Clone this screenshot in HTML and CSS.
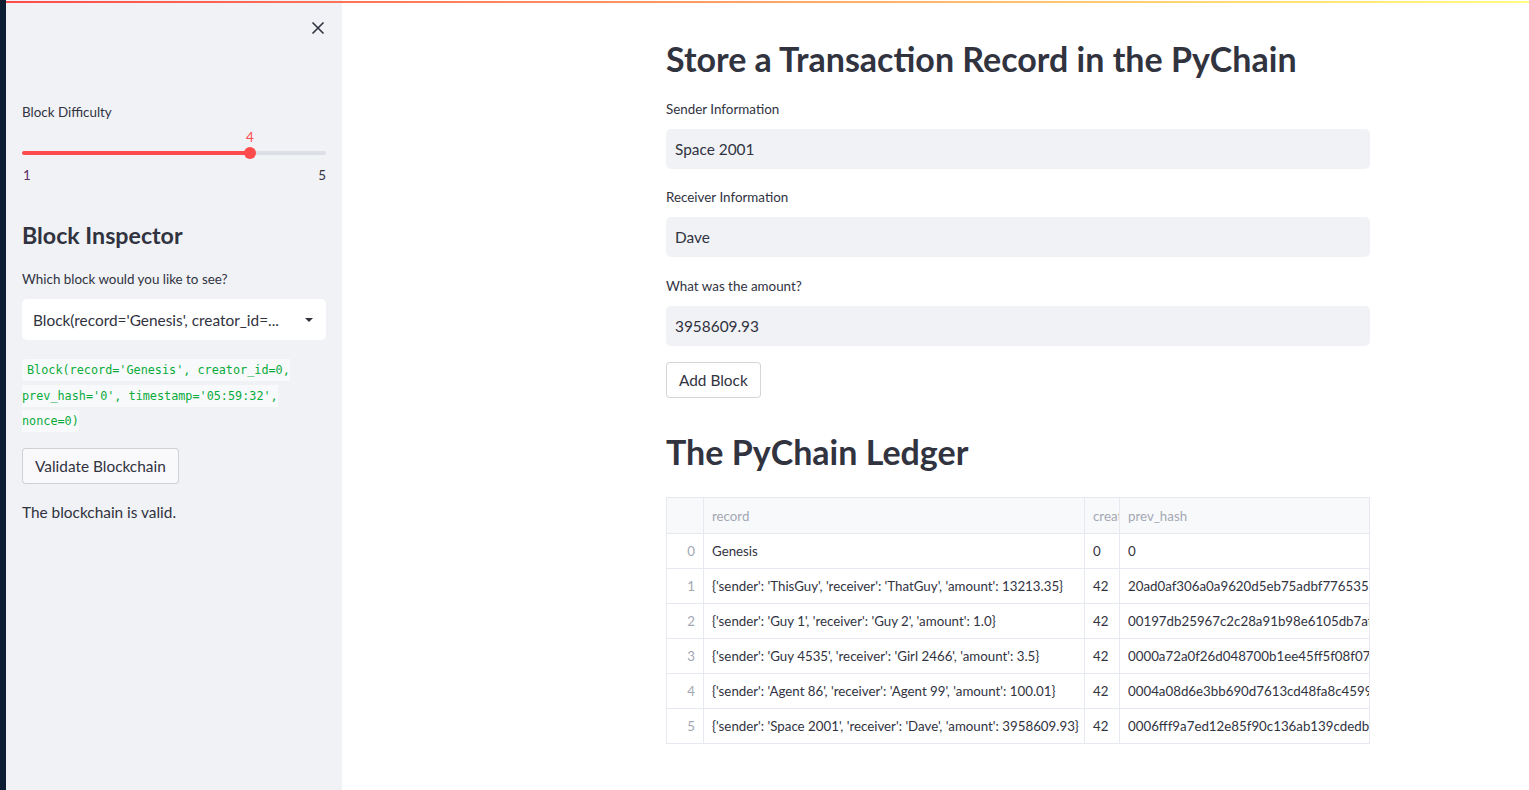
FILE: index.html
```html
<!DOCTYPE html>
<html>
<head>
<meta charset="utf-8">
<link rel="stylesheet" href="styles.css">
</head>
<body>
<div class="strip"></div>
<div class="decoration"></div>
<aside class="sidebar">
  <div class="close-row">
    <svg class="close" width="14" height="14" viewBox="0 0 14 14"><path d="M1.5 1.5 L12.5 12.5 M12.5 1.5 L1.5 12.5" stroke="#31333f" stroke-width="1.6" fill="none"/></svg>
  </div>
  <div class="label sb-label">Block Difficulty</div>
  <div class="slider">
    <div class="track">
      <div class="fill" style="width:75%"></div>
      <div class="thumb" style="left:75%"><span class="thumb-val">4</span></div>
    </div>
    <div class="ticks"><span class="tick-min">1</span><span>5</span></div>
  </div>
  <h2 class="sb-h2">Block Inspector</h2>
  <div class="label">Which block would you like to see?</div>
  <div class="select">
    <span class="select-text">Block(record='Genesis', creator_id=...</span>
    <svg width="10" height="6" viewBox="0 0 10 6"><path d="M1 1 H9 L5 5 Z" fill="#31333f"/></svg>
  </div>
  <p class="code-p"><code>Block(record='Genesis', creator_id=0, prev_hash='0', timestamp='05:59:32', nonce=0)</code></p>
  <div><button class="btn sb-btn">Validate Blockchain</button></div>
  <p class="valid">The blockchain is valid.</p>
</aside>
<main class="main">
  <div class="block">
    <h1 class="h1-first">Store a Transaction Record in the PyChain</h1>
    <div class="label m-label">Sender Information</div>
    <div class="input">Space 2001</div>
    <div class="label m-label2">Receiver Information</div>
    <div class="input">Dave</div>
    <div class="label m-label3">What was the amount?</div>
    <div class="input">3958609.93</div>
    <div><button class="btn add-btn">Add Block</button></div>
    <h1 class="h1-second">The PyChain Ledger</h1>
    <div class="table">
      <div class="row head">
        <div class="c idx"></div>
        <div class="c rec">record</div>
        <div class="c cre">creat</div>
        <div class="c hash">prev_hash</div>
      </div>
      <div class="row">
        <div class="c idx">0</div>
        <div class="c rec">Genesis</div>
        <div class="c cre">0</div>
        <div class="c hash">0</div>
      </div>
      <div class="row">
        <div class="c idx">1</div>
        <div class="c rec">{'sender': 'ThisGuy', 'receiver': 'ThatGuy', 'amount': 13213.35}</div>
        <div class="c cre">42</div>
        <div class="c hash">20ad0af306a0a9620d5eb75adbf77653587</div>
      </div>
      <div class="row">
        <div class="c idx">2</div>
        <div class="c rec">{'sender': 'Guy 1', 'receiver': 'Guy 2', 'amount': 1.0}</div>
        <div class="c cre">42</div>
        <div class="c hash">00197db25967c2c28a91b98e6105db7af84</div>
      </div>
      <div class="row">
        <div class="c idx">3</div>
        <div class="c rec">{'sender': 'Guy 4535', 'receiver': 'Girl 2466', 'amount': 3.5}</div>
        <div class="c cre">42</div>
        <div class="c hash">0000a72a0f26d048700b1ee45ff5f08f077ae</div>
      </div>
      <div class="row">
        <div class="c idx">4</div>
        <div class="c rec">{'sender': 'Agent 86', 'receiver': 'Agent 99', 'amount': 100.01}</div>
        <div class="c cre">42</div>
        <div class="c hash">0004a08d6e3bb690d7613cd48fa8c4599f3</div>
      </div>
      <div class="row">
        <div class="c idx">5</div>
        <div class="c rec">{'sender': 'Space 2001', 'receiver': 'Dave', 'amount': 3958609.93}</div>
        <div class="c cre">42</div>
        <div class="c hash">0006fff9a7ed12e85f90c136ab139cdedb16</div>
      </div>
    </div>
  </div>
</main>
</body>
</html>
```
FILE: styles.css
```css
* { box-sizing: border-box; }
html, body { margin: 0; padding: 0; }
body {
  display: flex;
  height: 790px;
  overflow: hidden;
  font-family: "Lato", "Noto Sans", sans-serif;
  color: #31333f;
  background: #ffffff;
  position: relative;
}
.strip {
  width: 6px;
  flex: 0 0 6px;
  background: #0d1e33;
}
.decoration {
  position: absolute;
  left: 6px;
  right: 0;
  top: 1px;
  height: 2px;
  background: linear-gradient(90deg, #ff4b4b, #fffd80);
  z-index: 5;
}
.sidebar {
  width: 336px;
  flex: 0 0 336px;
  background: #f0f2f6;
  padding: 0 16px;
  display: flex;
  flex-direction: column;
}
.close-row {
  display: flex;
  justify-content: flex-end;
  padding-top: 21px;
  padding-right: 1px;
}
.label {
  font-size: 13.4px;
  line-height: 20px;
  color: #31333f;
}
.sb-label { margin-top: 67px; }
.slider { margin-top: 29px; }
.track {
  position: relative;
  height: 4px;
  border-radius: 2px;
  background: #dcdfe6;
}
.fill {
  height: 4px;
  border-radius: 2px;
  background: #ff4b4b;
}
.thumb {
  position: absolute;
  top: -4px;
  width: 12px;
  height: 12px;
  margin-left: -6px;
  border-radius: 50%;
  background: #ff4b4b;
}
.thumb-val {
  position: absolute;
  bottom: 14px;
  left: 50%;
  transform: translateX(-50%);
  font-size: 13.4px;
  line-height: 16px;
  color: #ff4b4b;
}
.ticks {
  display: flex;
  justify-content: space-between;
  font-size: 13.4px;
  line-height: 20px;
  margin-top: 10px;
  padding: 0 0 0 1px;
}
.tick-min { color: #5b2e66; }
.sb-h2 {
  margin: 35px 0 0;
  font-size: 23.2px;
  line-height: 30px;
  font-weight: 700;
}
.sb-h2 + .label { margin-top: 19px; }
.select {
  margin-top: 10px;
  height: 41px;
  background: #ffffff;
  border-radius: 5px;
  display: flex;
  align-items: center;
  justify-content: space-between;
  padding: 0 12px 0 11px;
  font-size: 15.4px;
}
.select-text { white-space: nowrap; }
.code-p {
  margin: 16px 0 0;
  font-size: 15.4px;
  line-height: 25.6px;
}
code {
  font-family: "DejaVu Sans Mono", "Liberation Mono", monospace;
  font-size: 11.8px;
  line-height: 1;
  color: #09ab3b;
  background: #f8f9fb;
  padding: 4px 0 4px 5px;
  border-radius: 4px;
}
.btn {
  font-family: inherit;
  font-size: 15.4px;
  color: #31333f;
  border: 1px solid rgba(49, 51, 63, 0.2);
  border-radius: 4px;
  height: 36px;
  padding: 0 12px;
}
.sb-btn {
  margin-top: 15px;
  background: #f9f9fb;
}
.valid {
  margin: 15px 0 0;
  font-size: 15.4px;
  line-height: 26px;
}
.main {
  flex: 1;
  padding-left: 324px;
}
.block {
  width: 704px;
  display: flex;
  flex-direction: column;
  align-items: stretch;
}
h1 {
  margin: 0;
  font-size: 34px;
  line-height: 43px;
  font-weight: 700;
  color: #31333f;
}
.h1-first { margin-top: 37px; }
.m-label { margin-top: 19px; }
.m-label2 { margin-top: 18px; }
.m-label3 { margin-top: 19px; }
.input {
  margin-top: 10px;
  height: 40px;
  background: #f0f2f6;
  border-radius: 5px;
  padding: 0 9px;
  display: flex;
  align-items: center;
  font-size: 15.4px;
}
.add-btn {
  margin-top: 16px;
  background: #ffffff;
}
.h1-second { margin-top: 32px; }
.table {
  margin-top: 24px;
  border: 1px solid #e6e9ef;
  font-size: 13.3px;
}
.row {
  display: flex;
  height: 35px;
  border-top: 1px solid #e6e9ef;
}
.row.head {
  border-top: none;
  background: #f8f9fb;
  color: #a3a8b3;
  height: 35px;
}
.c {
  display: flex;
  align-items: center;
  padding: 0 8px;
  white-space: nowrap;
  overflow: hidden;
  border-left: 1px solid #e6e9ef;
}
.c:first-child { border-left: none; }
.idx {
  width: 36px;
  flex: 0 0 36px;
  justify-content: flex-end;
  color: #a3a8b3;
}
.rec { width: 381px; flex: 0 0 381px; }
.cre { width: 35px; flex: 0 0 35px; }
.hash { flex: 1; min-width: 0; }
```
